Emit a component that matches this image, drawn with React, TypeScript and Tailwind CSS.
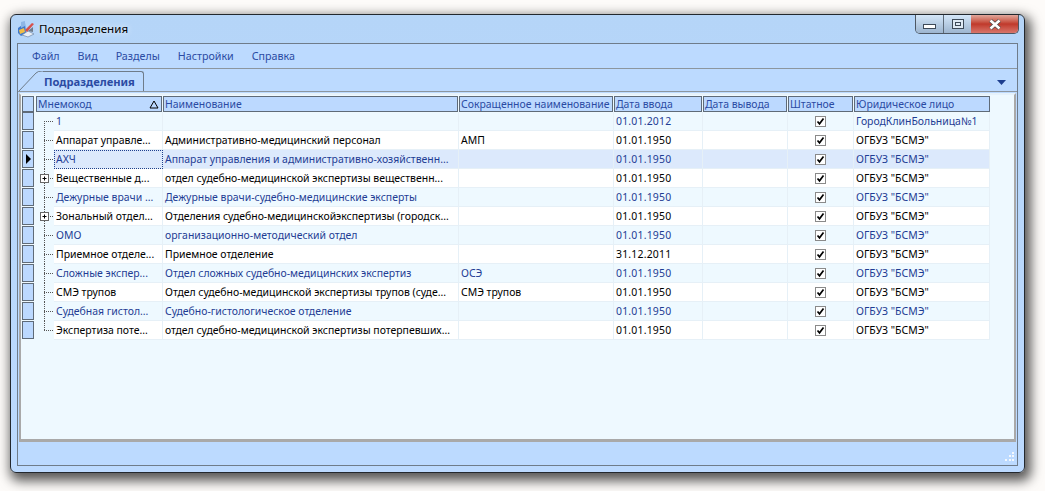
const rows = [
  { code: "1", name: "", short: "", start: "01.01.2012", org: "ГородКлинБольница№1", blue: true, first: true },
  { code: "Аппарат управле...", name: "Административно-медицинский персонал", short: "АМП", start: "01.01.1950", org: 'ОГБУЗ "БСМЭ"' },
  { code: "АХЧ", name: "Аппарат управления и административно-хозяйственн...", short: "", start: "01.01.1950", org: 'ОГБУЗ "БСМЭ"', blue: true, selected: true },
  { code: "Вещественные д...", name: "отдел судебно-медицинской экспертизы вещественн...", short: "", start: "01.01.1950", org: 'ОГБУЗ "БСМЭ"', plus: true },
  { code: "Дежурные врачи ...", name: "Дежурные врачи-судебно-медицинские эксперты", short: "", start: "01.01.1950", org: 'ОГБУЗ "БСМЭ"', blue: true },
  { code: "Зональный отдел...", name: "Отделения судебно-медицинскойэкспертизы (городск...", short: "", start: "01.01.1950", org: 'ОГБУЗ "БСМЭ"', plus: true },
  { code: "ОМО", name: "организационно-методический отдел", short: "", start: "01.01.1950", org: 'ОГБУЗ "БСМЭ"', blue: true },
  { code: "Приемное отделе...", name: "Приемное отделение", short: "", start: "31.12.2011", org: 'ОГБУЗ "БСМЭ"' },
  { code: "Сложные экспер...", name: "Отдел сложных судебно-медицинских экспертиз", short: "ОСЭ", start: "01.01.1950", org: 'ОГБУЗ "БСМЭ"', blue: true },
  { code: "СМЭ трупов", name: "Отдел судебно-медицинской экспертизы трупов (суде...", short: "СМЭ трупов", start: "01.01.1950", org: 'ОГБУЗ "БСМЭ"' },
  { code: "Судебная гистол...", name: "Судебно-гистологическое отделение", short: "", start: "01.01.1950", org: 'ОГБУЗ "БСМЭ"', blue: true },
  { code: "Экспертиза поте...", name: "отдел судебно-медицинской экспертизы потерпевших...", short: "", start: "01.01.1950", org: 'ОГБУЗ "БСМЭ"', last: true },
];

const columns = "grid-cols-[13px_128px_296px_155px_89px_85px_66px_136px]";

const AppIcon = () => (
  <svg width="18" height="18" viewBox="0 0 18 18">
    <path d="M1 8 L8 3 L9 13 L4 16 L1 13Z" fill="#3d78cc" />
    <path d="M4 2 L8 1 L8 6 L4 8Z" fill="#8db6e6" />
    <path d="M5 15 L11 11 L17 14 L11 17Z" fill="#e9eff7" stroke="#6f86a6" strokeWidth="0.7" />
    <path d="M2 10 L7 8 L8 12 L3 14Z" fill="#f2bd45" />
    <path d="M8 10 L15 3 L17 4 L10 12Z" fill="#d8504a" />
    <path d="M11 11 L16 7 L16 12Z" fill="#6f7c8c" />
  </svg>
);

const TreeLines = ({ first, last, plus }: { first?: boolean; last?: boolean; plus?: boolean }) => (
  <svg width="18" height="19" viewBox="0 0 18 19" className="shrink-0">
    <line x1="8.5" y1={first ? 9 : 0} x2="8.5" y2={last ? 9 : 19} stroke="#555" strokeDasharray="1 1" />
    <line x1="8" y1="9.5" x2="17" y2="9.5" stroke="#555" strokeDasharray="1 1" />
    {plus && (
      <>
        <rect x="4.5" y="5.5" width="8" height="8" fill="#fff" stroke="#666" />
        <path d="M6.5 9.5 H10.5 M8.5 7.5 V11.5" stroke="#000" />
      </>
    )}
  </svg>
);

const Check = () => (
  <span className="flex h-[11px] w-[11px] items-center justify-center border border-[#8a8a8a] bg-white">
    <svg width="9" height="9" viewBox="0 0 9 9">
      <path d="M1.5 4.5 L3.5 6.8 L7.5 1.5" fill="none" stroke="#000" strokeWidth="1.7" />
    </svg>
  </span>
);

const headCell = "h-[16px] mr-[1px] flex items-center border border-[#5f6b78] bg-[#bcd9ff] px-[1px] text-[#2b4ba3] whitespace-nowrap overflow-hidden";

export default function App() {
  return (
    <div className="h-[491px] w-[1045px] overflow-hidden bg-[#fdfbf9] pl-[10px] pt-[14px] font-['Noto_Sans',sans-serif] text-[10.7px] leading-none">
      <div className="flex h-[459px] w-[1015px] flex-col rounded-[6px] border border-[#23282e] bg-gradient-to-b from-[#b5d5f8] to-[#bcdaff] px-[6px] shadow-[3px_5px_12px_3px_rgba(0,0,0,0.65)]">
        {/* Title bar */}
        <div className="flex h-[28px] shrink-0 items-start">
          <div className="flex h-[28px] items-center gap-[4px]">
            <AppIcon />
            <span className="text-[11.6px] text-black [text-shadow:0_0_6px_#fff]">Подразделения</span>
          </div>
          <div className="ml-auto mr-[-1px] flex h-[19px] overflow-hidden rounded-b-[5px] border border-t-0 border-[#4d5763]">
            <div className="flex w-[28px] items-end justify-center border-r border-[#5d6a78] bg-gradient-to-b from-[#d4e6f8] to-[#9db5cf] pb-[4px]">
              <span className="h-[5px] w-[13px] border border-[#3e4a58] bg-white" />
            </div>
            <div className="flex w-[27px] items-center justify-center bg-gradient-to-b from-[#d4e6f8] to-[#9db5cf]">
              <span className="flex h-[10px] w-[12px] items-center justify-center border border-[#3e4a58] bg-[#dfeaf5]">
                <span className="h-[4px] w-[6px] border border-[#3e4a58]" />
              </span>
            </div>
            <div className="flex w-[47px] items-center justify-center bg-gradient-to-b from-[#e0a79c] via-[#c0392b] to-[#d8756b]">
              <svg width="14" height="11" viewBox="0 0 14 11">
                <path d="M2.5 1.5 L11.5 9.5 M11.5 1.5 L2.5 9.5" stroke="#4a4a4a" strokeWidth="4" />
                <path d="M2.5 1.5 L11.5 9.5 M11.5 1.5 L2.5 9.5" stroke="#fff" strokeWidth="2.6" />
              </svg>
            </div>
          </div>
        </div>

        {/* Client area */}
        <div className="flex flex-1 flex-col border border-[#6f7c8a] bg-[#bcdaff]">
          {/* Menu */}
          <div className="flex h-[24px] shrink-0 items-center gap-[18px] pl-[14px] text-[#2b4ba3]">
            <span>Файл</span>
            <span>Вид</span>
            <span>Разделы</span>
            <span>Настройки</span>
            <span>Справка</span>
          </div>

          {/* Tab strip */}
          <div className="flex h-[24px] shrink-0 items-end justify-between border-y border-[#8c969f] pl-[1px] pr-[11px]">
            <div className="flex items-end">
              <svg width="25" height="20" viewBox="0 0 25 20" className="-mr-px">
                <path d="M0 20 L17 2 Q19 0 23 0 L25 0" fill="#bcdaff" stroke="#6f7c8a" />
              </svg>
              <div className="flex h-[20px] w-[101px] items-center rounded-tr-[3px] border-r border-t border-[#6f7c8a] bg-[#bcdaff] pl-[1px] text-[11.2px] font-bold text-[#2b4ba3]">
                Подразделения
              </div>
            </div>
            <svg width="9" height="5" viewBox="0 0 9 5" className="mb-[6px]">
              <path d="M0 0 H9 L4.5 5Z" fill="#1e3f8f" />
            </svg>
          </div>

          {/* Grid */}
          <div className="mx-[1px] mt-[1px] flex-1 border-[2px] border-b-[3px] border-[#a9a9a9] border-t-[#e6f2fb] bg-[#eef9ff] pl-[1px] pt-[1px] text-[10.45px]">
            <div className={`grid w-fit ${columns}`}>
              <div className="h-[16px] w-[12px] border border-[#5f6b78] bg-[#bcd9ff]" />
              <div className={`${headCell} ml-px justify-between`}>
                Мнемокод
                <svg width="10" height="9" viewBox="0 0 10 9" className="mr-[1px]">
                  <path d="M5 1 L9 8 H1Z" fill="none" stroke="#000" />
                </svg>
              </div>
              <div className={headCell}>Наименование</div>
              <div className={headCell}>Сокращенное наименование</div>
              <div className={headCell}>Дата ввода</div>
              <div className={headCell}>Дата вывода</div>
              <div className={headCell}>Штатное</div>
              <div className="flex h-[16px] items-center border border-[#5f6b78] bg-[#bcd9ff] px-[1px] text-[#2b4ba3]">Юридическое лицо</div>

              {rows.map((row) => {
                const bg = row.selected ? "bg-[#dce9fc]" : row.blue ? "bg-[#eef9ff]" : "bg-white";
                const text = row.blue ? "text-[#1f3d94]" : "text-black";
                const cell = `flex h-[19px] items-center border-r border-b border-[#e6f0f7] px-[2px] whitespace-nowrap overflow-hidden ${bg} ${text}`;
                return (
                  <div key={row.code} className="contents">
                    <div className="mb-px flex h-[18px] w-[12px] items-center border border-[#5f6b78] bg-[#bcd9ff]">
                      {row.selected && (
                        <svg width="7" height="10" viewBox="0 0 7 10" className="ml-[2px]">
                          <path d="M1 0 L6 5 L1 10Z" fill="#000" />
                        </svg>
                      )}
                    </div>
                    <div className="flex h-[19px] items-center pl-px">
                      <TreeLines first={row.first} last={row.last} plus={row.plus} />
                      <div className={`flex h-[19px] flex-1 items-center overflow-hidden whitespace-nowrap border-b border-r border-[#e6f0f7] pl-[2px] ${bg} ${text} ${row.selected ? "outline-1 -outline-offset-1 outline-dotted outline-[#1e3f8f]" : ""}`}>
                        {row.code}
                      </div>
                    </div>
                    <div className={cell}>{row.name}</div>
                    <div className={cell}>{row.short}</div>
                    <div className={`${cell} tracking-[0.2px]`}>{row.start}</div>
                    <div className={cell} />
                    <div className={`${cell} justify-center`}><Check /></div>
                    <div className={cell}>{row.org}</div>
                  </div>
                );
              })}
            </div>
          </div>

          {/* Status bar */}
          <div className="flex h-[23px] shrink-0 items-end justify-end pb-[2px] pr-[2px]">
            <svg width="12" height="11" viewBox="0 0 12 11" fill="#f4f8fc">
              <rect x="9" y="0" width="2" height="2" />
              <rect x="6" y="3" width="2" height="2" />
              <rect x="9" y="3" width="2" height="2" />
              <rect x="2" y="7" width="2" height="2" />
              <rect x="6" y="7" width="2" height="2" />
              <rect x="9" y="7" width="2" height="2" />
            </svg>
          </div>
        </div>
        <div className="h-[6px] shrink-0" />
      </div>
    </div>
  );
}
